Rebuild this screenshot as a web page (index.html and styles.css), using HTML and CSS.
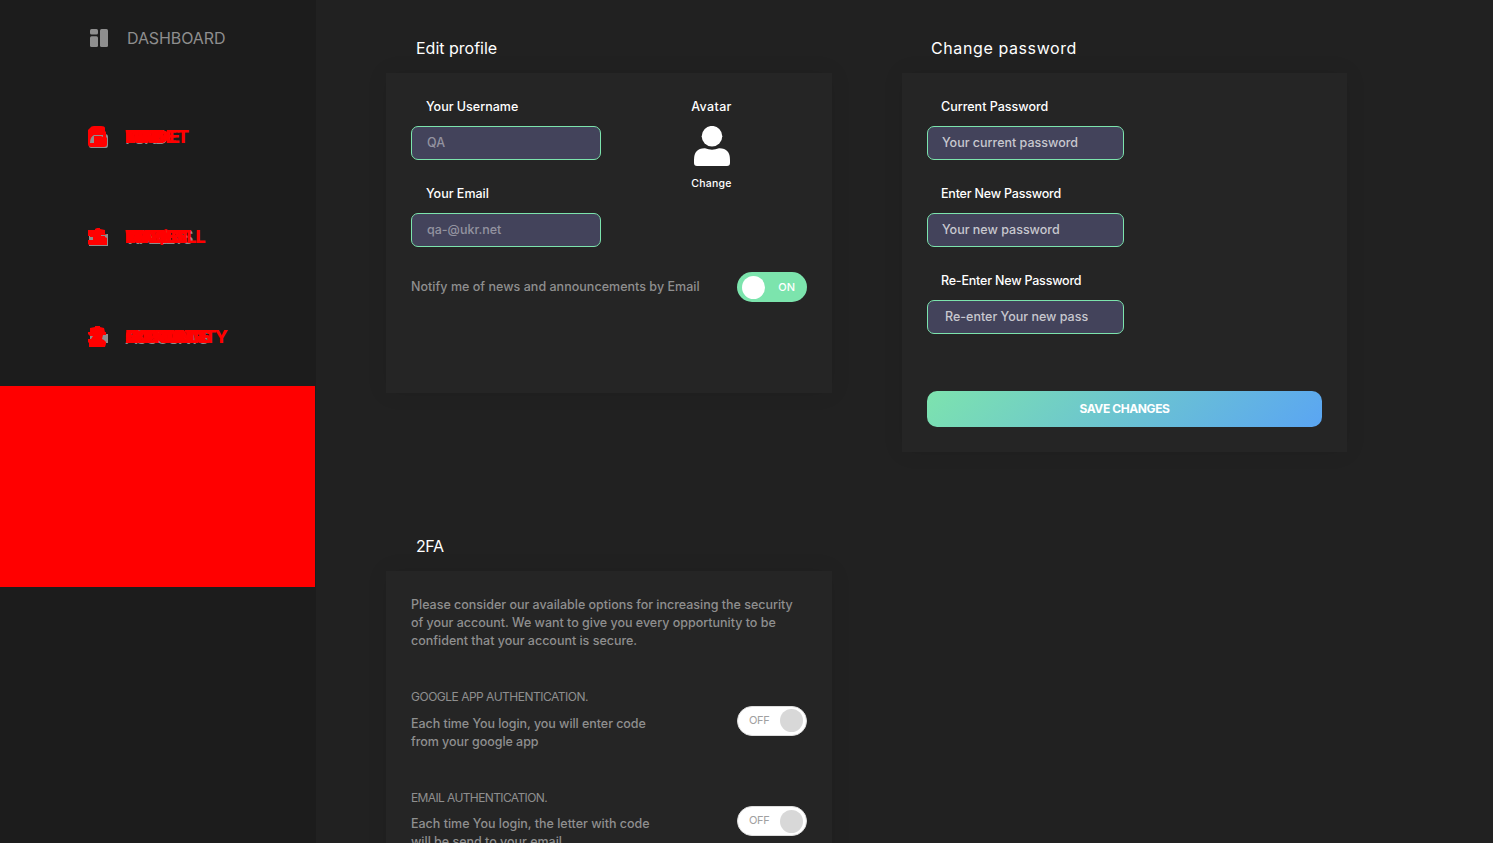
FILE: index.html
```html
<!DOCTYPE html>
<html lang="en">
<head>
<meta charset="utf-8">
<title>Settings</title>
<link rel="stylesheet" href="styles.css">
</head>
<body>
<div class="page">
  <nav class="sidebar">
    <a class="nav-item nav-home">
      <svg class="home-icon" width="18" height="18" viewBox="0 0 18 18"><rect x="0" y="0" width="8" height="5.600" rx="1.5"/><rect x="0" y="7.300" width="8" height="10.700" rx="1.5"/><rect x="10" y="0" width="8" height="18" rx="1.5"/></svg>
      <span class="home-label">DASHBOARD</span>
    </a>
    <a class="nav-item">
      <svg class="nav-icon" width="22" height="24" viewBox="0 0 22 24"><path class="under" d="M4 9h14q3 0 3 3v8q0 3-2 3H4q-2 0-2-2v-9q0-3 2-3z"/><path d="M1 5L3 3Q4 1 7 1h7q4 0 4 2v3l1 1v5l1 1v6q0 3-3 3H4q-3 0-3-3zM7 10Q3 12 3 18H7V11h7l2 1V10z" fill-rule="evenodd"/><path d="M10 15h5v-1h3v2h-2v4h-6z"/></svg>
      <span class="stack"><span class="muted">FUND</span><span>WALK</span><span>TRADE</span><span>FUND</span><span class="w-market">MARKET</span></span>
    </a>
    <a class="nav-item">
      <svg class="nav-icon" width="22" height="24" viewBox="0 0 22 24"><path class="under" d="M2 9h19v12H2z"/><path d="M1 5h7V4l2-1h3v1l5 1v4l2 1H14v1h4v1l2 1v7H2l-1-1v-4h5v-3H3V11H1z"/></svg>
      <span class="stack"><span class="muted">WALLETS</span><span>WALLET</span><span>TRADES</span><span>MARKET</span><span class="w-sell">BUY/SELL</span></span>
    </a>
    <a class="nav-item">
      <svg class="nav-icon" width="22" height="24" viewBox="0 0 22 24"><path class="under" d="M3 9h18v9h-3H3z"/><path d="M3 3l5-1V1h5v1l4 1 1 4h1v3h-3l-1 4 2 1 2 2v2l-1 3H2v-4l-1-1v-3h3l2-3H3L1 9V7h2z"/></svg>
      <span class="stack"><span class="muted">ACCOUNTS</span><span>ACCOUNTS</span><span>SUPPORT</span><span>EXCHANGE</span><span class="w-community">COMMUNITY</span></span>
    </a>
    <div class="nav-block"></div>
  </nav>

  <main class="content">
    <section class="panel">
      <h2 class="title">Edit profile</h2>
      <div class="card card-profile">
        <div class="profile-top">
          <div class="fields">
            <label class="label">Your Username</label>
            <div class="input muted-value">QA</div>
            <label class="label">Your Email</label>
            <div class="input muted-value">qa-@ukr.net</div>
          </div>
          <div class="avatar">
            <span class="avatar-title">Avatar</span>
            <svg width="36" height="40" viewBox="0 0 36 40"><circle cx="18" cy="10.200" r="10.300"/><path d="M0 34Q0 22 11 22.300Q18 25 25 22.300Q36 22 36 34V37Q36 40 33 40H3Q0 40 0 37Z"/></svg>
            <span class="change">Change</span>
          </div>
        </div>
        <div class="row">
          <span class="text notify">Notify me of news and announcements by Email</span>
          <span class="toggle on"><span class="knob"></span><span>ON</span></span>
        </div>
      </div>
    </section>

    <section class="panel">
      <h2 class="title title-password">Change password</h2>
      <div class="card card-password">
        <label class="label">Current Password</label>
        <div class="input wide">Your current password</div>
        <label class="label tight">Enter New Password</label>
        <div class="input wide">Your new password</div>
        <label class="label tight">Re-Enter New Password</label>
        <div class="input wide clipped"><span>Re-enter Your new password</span></div>
        <button class="save">SAVE CHANGES</button>
      </div>
    </section>

    <section class="panel">
      <h2 class="title title-2fa">2FA</h2>
      <div class="card card-2fa">
        <p class="text">Please consider our available options for increasing the security<br>of your account. We want to give you every opportunity to be<br>confident that your account is secure.</p>
        <div class="row option">
          <div>
            <h3 class="option-title">GOOGLE APP AUTHENTICATION.</h3>
            <p class="text option-text">Each time You login, you will enter code<br>from your google app</p>
          </div>
          <span class="toggle off"><span class="state">OFF</span><span class="knob"></span></span>
        </div>
        <div class="row option">
          <div>
            <h3 class="option-title short">EMAIL AUTHENTICATION.</h3>
            <p class="text">Each time You login, the letter with code<br>will be send to your email</p>
          </div>
          <span class="toggle off"><span class="state">OFF</span><span class="knob"></span></span>
        </div>
      </div>
    </section>
  </main>
</div>
</body>
</html>
```
FILE: styles.css
```css
* { box-sizing: border-box; }
body { margin: 0; background: #212121; color: #fff; font-family: Inter, "Open Sans", sans-serif; font-size: 12.5px; font-weight: 500; }
h2, h3, p { margin: 0; }
.page { display: flex; height: 843px; overflow: hidden; }

.sidebar { width: 316px; flex: none; background: #1c1c1c; }
.nav-item { display: flex; align-items: center; gap: 16px; height: 100px; padding-left: 87px; }
.nav-home { height: 87px; padding: 0 0 11px 90px; gap: 19px; }
.home-icon { fill: #8e8e8e; }
.home-label { font-size: 16px; font-weight: 400; color: #8e8e8e; letter-spacing: -0.1px; }
.nav-icon { fill: #f00; }
.nav-icon .under { fill: #8e8e8e; }
.stack { display: grid; color: #f00; font-size: 18px; font-weight: 800; line-height: 24px; letter-spacing: -2.6px; white-space: nowrap; }
.stack > span { grid-area: 1 / 1; }
.stack .muted { padding-top: 1px; margin-bottom: -1px; color: #8e8e8e; font-weight: 500; }
.stack .w-market { letter-spacing: -3px; }
.stack .w-sell { letter-spacing: -1.2px; }
.stack .w-community { letter-spacing: -2px; }
.nav-block { width: 315px; height: 201px; margin-top: -1px; background: #f00; }

.content { display: grid; grid-template-columns: 446px 445px; grid-template-rows: 498px 400px; column-gap: 70px; padding: 33px 0 0 70px; }
.title { height: 40px; padding-left: 30px; line-height: 31px; font-size: 16px; font-weight: 400; }
.title-password { padding-left: 29px; letter-spacing: 0.6px; }
.title-2fa { letter-spacing: -0.4px; }
.card { background: #252525; box-shadow: 0 0 20px rgba(0, 0, 0, 0.08); padding: 25px; }
.card-profile { height: 320px; }
.card-password { height: 379px; }
.card-2fa { height: 400px; }
.label { display: block; height: 28px; padding-left: 15px; line-height: 18px; white-space: nowrap; }
.card-password .label { padding-left: 14px; }
.label.tight { letter-spacing: -0.2px; }
.input { width: 190px; height: 34px; margin-bottom: 25px; padding: 0 15px; border: 1px solid #7ce4ad; border-radius: 7px; background: #43435b; line-height: 32px; white-space: nowrap; overflow: hidden; color: #c8c8cf; }
.input.wide { width: 197px; padding: 0 14px; }
.input.clipped { padding: 0 35px 0 17px; }
.input.clipped span { display: block; overflow: hidden; }
.input.muted-value { color: #9393a0; }
.profile-top { display: flex; justify-content: space-between; }
.avatar { display: flex; flex-direction: column; align-items: center; width: 41px; margin-right: 75px; white-space: nowrap; }
.avatar-title { height: 28px; line-height: 18px; letter-spacing: 0.35px; }
.avatar svg { fill: #fff; flex: none; }
.change { margin-top: 9px; line-height: 17px; font-size: 10.5px; letter-spacing: 0.25px; }
.text { color: #8f8f8f; line-height: 18px; white-space: nowrap; letter-spacing: -0.01px; }
.notify { letter-spacing: 0.03px; }
.option-text { letter-spacing: -0.05px; }
.row { display: flex; justify-content: space-between; align-items: center; }
.toggle { display: flex; align-items: center; justify-content: space-between; flex: none; width: 70px; height: 30px; border-radius: 15px; font-size: 11px; }
.knob { display: block; flex: none; width: 23px; height: 23px; border-radius: 50%; }
.on { padding: 0 12px 0 5px; background: #7ce4ad; }
.on .knob { background: #fff; }
.off { margin-top: 2px; padding: 0 3px 0 11px; background: #fff; border: 1px solid #ddd; color: #a0a0a0; font-weight: 400; }
.off .knob { background: #d8d8d8; }
.state { padding-bottom: 2px; letter-spacing: -0.3px; }
.save { display: block; width: 395px; height: 36px; margin-top: 57px; padding: 0 0 1px; border: 0; border-radius: 10px; background: linear-gradient(135deg, #7de3ae, #5aa5f3); color: #fff; font: 700 12px Inter, sans-serif; letter-spacing: -0.4px; }
.option { margin-top: 38px; }
.option-title { height: 27px; line-height: 18px; color: #8f8f8f; font-size: 12px; font-weight: 400; white-space: nowrap; letter-spacing: -0.5px; }
.option-title.short { height: 26px; letter-spacing: -0.62px; }
```
